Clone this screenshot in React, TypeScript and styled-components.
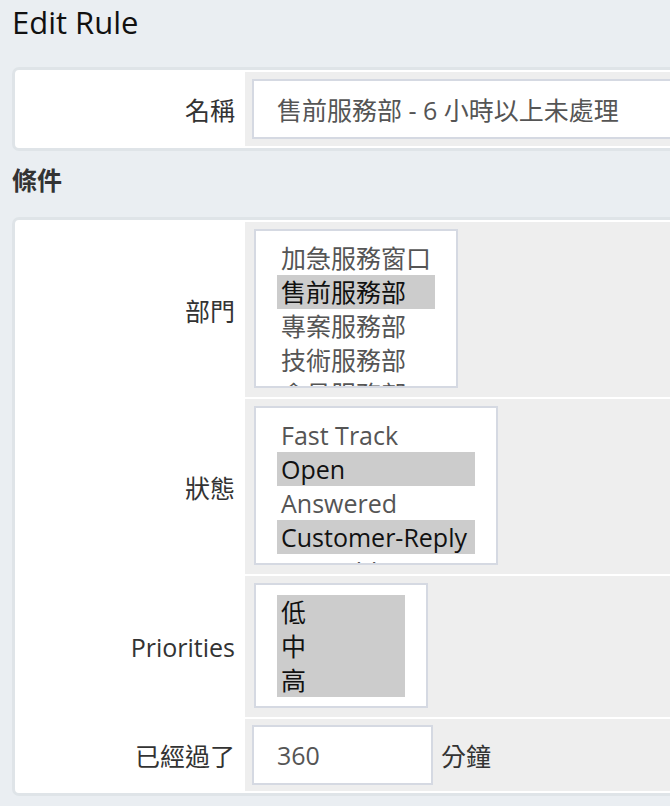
import * as React from "react";
import styled, {createGlobalStyle} from "styled-components";

const GlobalStyle = createGlobalStyle`
  html, body {
    margin: 0;
    padding: 0;
    background: #eaeef2;
    overflow: hidden;
  }
  body {
    font-family: "Open Sans", "Noto Sans CJK TC", sans-serif;
    color: #333;
  }
`;

const Page = styled.div`
  padding: 0 12px;
  width: 760px;
`;

const Title = styled.h1`
  margin: 5px 0 28px;
  font-size: 31px;
  line-height: 34px;
  font-weight: 400;
  color: #111;
`;

const Heading = styled.h2`
  margin: 13px 0 21px;
  font-size: 25px;
  line-height: 32px;
  font-weight: 700;
  color: #333;
`;

const Card = styled.div`
  display: grid;
  grid-template-columns: 226px 1fr;
  gap: 2px;
  padding: 2px;
  background: #fff;
  border: 3px solid #dfe4e8;
  border-radius: 7px;
`;

const Label = styled.div`
  display: flex;
  align-items: center;
  justify-content: flex-end;
  padding-right: 8px;
  font-size: 25px;
  color: #333;
`;

const Field = styled.div<{$pad: string}>`
  display: flex;
  align-items: flex-start;
  gap: 8px;
  background: #eeeeee;
  padding: ${p => p.$pad};
  font-size: 25px;
  color: #333;
`;

const Input = styled.div<{$width: number}>`
  box-sizing: border-box;
  width: ${p => p.$width}px;
  height: 60px;
  padding: 0 23px;
  display: flex;
  align-items: center;
  background: #fff;
  border: 2px solid #d5d9e2;
  font-size: 25px;
  color: #555;
  white-space: nowrap;
  overflow: hidden;
`;

const Unit = styled.span`
  align-self: center;
  color: #333;
`;

const ListBox = styled.div<{$width: number; $height: number}>`
  box-sizing: border-box;
  width: ${p => p.$width}px;
  height: ${p => p.$height}px;
  margin-left: 2px;
  padding: 10px 21px 0;
  background: #fff;
  border: 2px solid #d5d9e2;
  overflow: hidden;
`;

const Option = styled.div<{$selected?: boolean}>`
  height: 34px;
  line-height: 34px;
  padding-left: 4px;
  font-size: 25px;
  white-space: nowrap;
  color: ${p => (p.$selected ? "#111" : "#555")};
  background: ${p => (p.$selected ? "#cccccc" : "transparent")};
`;

interface ListProps {
  width: number;
  height: number;
  options: string[];
  selected: string[];
}

const List = ({width, height, options, selected}: ListProps) => (
  <ListBox $width={width} $height={height}>
    {options.map(o => (
      <Option key={o} $selected={selected.includes(o)}>
        {o}
      </Option>
    ))}
  </ListBox>
);

const departments = ["加急服務窗口", "售前服務部", "專案服務部", "技術服務部", "會員服務部", "財務部"];
const statuses = ["Fast Track", "Open", "Answered", "Customer-Reply", "On Hold", "In Progress", "Closed"];
const priorities = ["低", "中", "高"];

const listPad = "7px 7px 9px";

export default function App() {
  return (
    <>
      <GlobalStyle />
      <Page>
        <Title>Edit Rule</Title>
        <Card>
          <Label>名稱</Label>
          <Field $pad="7px">
            <Input $width={470}>售前服務部 - 6 小時以上未處理</Input>
          </Field>
        </Card>
        <Heading>條件</Heading>
        <Card>
          <Label>部門</Label>
          <Field $pad={listPad}>
            <List width={204} height={159} options={departments} selected={["售前服務部"]} />
          </Field>
          <Label>狀態</Label>
          <Field $pad={listPad}>
            <List width={244} height={159} options={statuses} selected={["Open", "Customer-Reply"]} />
          </Field>
          <Label>Priorities</Label>
          <Field $pad={listPad}>
            <List width={174} height={125} options={priorities} selected={priorities} />
          </Field>
          <Label>已經過了</Label>
          <Field $pad="6px 7px">
            <Input $width={181}>360</Input>
            <Unit>分鐘</Unit>
          </Field>
        </Card>
      </Page>
    </>
  );
}
